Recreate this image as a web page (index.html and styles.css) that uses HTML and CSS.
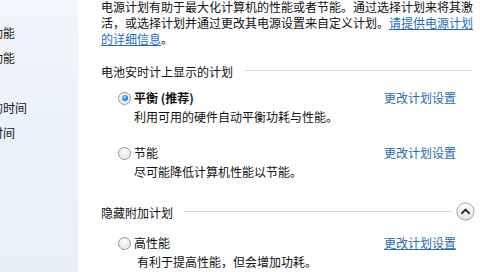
FILE: index.html
```html
<!DOCTYPE html>
<html lang="zh-CN">
<head>
<meta charset="utf-8">
<title>电源选项</title>
<link rel="stylesheet" href="styles.css">
</head>
<body>
<div class="window">
  <aside class="sidebar">
    <ul class="side-links">
      <li>唤醒时需要密码</li>
      <li>选择电源按钮的功能</li>
      <li>选择关闭盖子的功能</li>
      <li>创建电源计划</li>
      <li>选择关闭显示器的时间</li>
      <li>更改计算机睡眠时间</li>
    </ul>
  </aside>
  <main class="content">
    <p class="intro">电源计划有助于最大化计算机的性能或者节能。通过选择计划来将其激活，或选择计划并通过更改其电源设置来自定义计划。<a class="link-underline" href="#">请提供电源计划的详细信息</a>。</p>

    <div class="group-head group-head--first">
      <span class="group-title">电池安时计上显示的计划</span>
      <span class="group-rule"></span>
    </div>

    <div class="plan plan--first">
      <div class="plan-row">
        <span class="radio radio--checked"></span>
        <span class="plan-name plan-name--bold">平衡 (推荐)</span>
        <a class="plan-link" href="#">更改计划设置</a>
      </div>
      <div class="plan-desc">利用可用的硬件自动平衡功耗与性能。</div>
    </div>

    <div class="plan plan--second">
      <div class="plan-row">
        <span class="radio"></span>
        <span class="plan-name">节能</span>
        <a class="plan-link" href="#">更改计划设置</a>
      </div>
      <div class="plan-desc">尽可能降低计算机性能以节能。</div>
    </div>

    <div class="group-head group-head--hidden">
      <span class="group-title">隐藏附加计划</span>
      <span class="group-rule"></span>
      <span class="collapse-btn">
        <svg width="19" height="19" viewBox="0 0 19 19">
          <defs>
            <linearGradient id="btnbg" x1="0" y1="0" x2="0" y2="1">
              <stop offset="0" stop-color="#ffffff"/>
              <stop offset="1" stop-color="#e2e4e7"/>
            </linearGradient>
          </defs>
          <circle cx="9.5" cy="9.5" r="8.6" fill="url(#btnbg)" stroke="#9aa0a6" stroke-width="1"/>
          <path d="M6 11.1 L9.5 7.6 L13 11.1" fill="none" stroke="#262626" stroke-width="2" stroke-linecap="round" stroke-linejoin="round"/>
        </svg>
      </span>
    </div>

    <div class="plan plan--third">
      <div class="plan-row">
        <span class="radio"></span>
        <span class="plan-name">高性能</span>
        <a class="plan-link plan-link--underline" href="#">更改计划设置</a>
      </div>
      <div class="plan-desc plan-desc--wide">有利于提高性能，但会增加功耗。</div>
    </div>
  </main>
</div>
</body>
</html>
```

FILE: styles.css
```css
* {
  box-sizing: border-box;
}

html, body {
  margin: 0;
  padding: 0;
  width: 480px;
  height: 272px;
  overflow: hidden;
  background: #ffffff;
}

body {
  font-family: "Noto Sans CJK SC", "Microsoft YaHei", "Noto Sans", sans-serif;
  font-size: 12px;
  line-height: 16px;
  color: #111111;
}

.window {
  display: flex;
  width: 480px;
  height: 272px;
}

.sidebar {
  width: 78px;
  flex: none;
  height: 100%;
  overflow: hidden;
  background: linear-gradient(180deg, #f3f7fc 0%, #ebf1fa 45%, #e8eff9 100%);
}

.side-links {
  list-style: none;
  margin: 0 0 0 -93px;
  padding: 0;
}

.side-links li {
  white-space: nowrap;
  height: 25px;
  line-height: 16px;
  color: #151515;
}

.content {
  flex: 1;
  min-width: 0;
  padding: 0 0 0 23px;
}

.intro {
  margin: -1px 0 0;
  width: 376px;
}

.link-underline {
  color: #1f6cbc;
  text-decoration: underline;
}

.group-head {
  display: flex;
  align-items: center;
  height: 16px;
}

.group-head--first {
  margin-top: 17px;
  margin-right: 8px;
}

.group-head--hidden {
  margin-top: 25px;
  margin-right: 5px;
}

.group-title {
  flex: none;
  color: #111111;
}

.group-rule {
  flex: 1;
  height: 1px;
  background: #d3d9df;
  margin-left: 11px;
  margin-top: -3px;
}

.collapse-btn {
  flex: none;
  display: flex;
  margin-left: 4px;
  margin-top: -4px;
}

.plan {
  padding: 0 24px 0 17px;
}

.plan--first {
  margin-top: 10px;
}

.plan--second {
  margin-top: 20px;
}

.plan--third {
  margin-top: 14px;
}

.plan-row {
  display: flex;
  align-items: center;
  height: 16px;
}

.radio {
  flex: none;
  width: 13px;
  height: 13px;
  border-radius: 50%;
  border: 1px solid #8f959b;
  background: radial-gradient(circle at 50% 35%, #ffffff 0%, #eeeeee 45%, #cfd2d5 100%);
  display: flex;
  align-items: center;
  justify-content: center;
  box-shadow: inset 0 0 0 1px #f4f4f4;
}

.radio--checked::after {
  content: "";
  width: 6px;
  height: 6px;
  border-radius: 50%;
  background: radial-gradient(circle at 40% 35%, #a6dbff 0%, #3b8fdc 45%, #124f9c 100%);
}

.plan-name {
  margin-left: 3px;
  flex: 1;
  color: #0d0d0d;
}

.plan-name--bold {
  font-weight: bold;
}

.plan-link {
  flex: none;
  color: #2a6aad;
  text-decoration: none;
}

.plan-link--underline {
  text-decoration: underline;
}

.plan-desc {
  margin-top: 3px;
  padding-left: 16px;
  color: #111111;
}

.plan-desc--wide {
  padding-left: 19px;
}
```
